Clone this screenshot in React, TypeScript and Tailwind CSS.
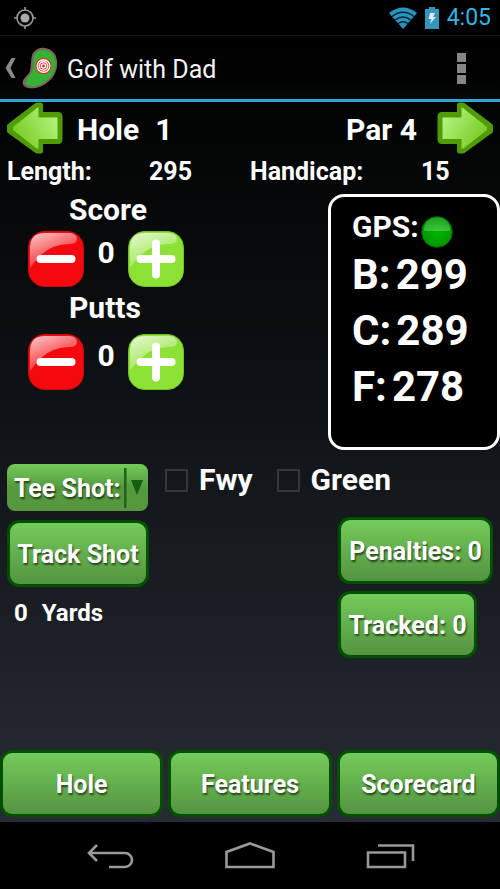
import { useState } from "react"

const greenButton = "h-[67px] rounded-xl border-3 border-[#005000] bg-linear-to-b from-[#74cb5a] to-[#549440] pt-0.5 text-[25px] font-bold whitespace-nowrap text-shadow-[1px_2px_2px_rgb(0_0_0/0.6)]"

function Arrow({ flip, id }: { flip?: boolean, id: string }) {
    return (
        <svg viewBox="0 0 56 52" className={flip ? "h-[52px] w-14 -scale-x-100" : "h-[52px] w-14"}>
            <defs>
                <linearGradient id={id} x1="1" y1="0.2" x2="0.1" y2="0.7">
                    <stop offset="0.1" stopColor="#b0f078" />
                    <stop offset="1" stopColor="#7acd28" />
                </linearGradient>
            </defs>
            <path d="M30 3H33.500V12.500H51Q53 12.500 53 15V37Q53 39.500 51 39.500H33.500V49H30L2.500 29V24Z" fill="#509c08" stroke="#509c08" strokeWidth="5" strokeLinejoin="round" />
            <path d="M30 6L31.500 5.500V15.500H50.500V37H31.500V47L29 46L6 28V25Z" fill={`url(#${id})`} />
        </svg>
    )
}

function StepIcon({ plus, id }: { plus?: boolean, id: string }) {
    return (
        <svg viewBox="0 0 56 56" className="size-14">
            <defs>
                <linearGradient id={id} x1="0.1" y1="0" x2="0.6" y2="0.9">
                    <stop offset="0" stopColor="#fff" stopOpacity="0.75" />
                    <stop offset="1" stopColor="#fff" stopOpacity="0.1" />
                </linearGradient>
            </defs>
            <rect x="0.5" y="0.5" width="55" height="55" rx="16" fill={plus ? "#8ce234" : "#f3090e"} stroke={plus ? "#72c226" : "#cc0a0c"} />
            <path d="M2 37V17Q2 2 17 2H42Q49 3 49 8Q49 13 41 13Q25 13 13 24Q6 31 2 37Z" fill={`url(#${id})`} />
            <path d="M12.500 28H43.500" stroke="#fff" strokeWidth="8" strokeLinecap="round" />
            {plus && <path d="M28 12.500V43.500" stroke="#fff" strokeWidth="8" strokeLinecap="round" />}
        </svg>
    )
}

function Counter({ label }: { label: string }) {
    const [count, setCount] = useState(0)
    return (
        <div className="group">
            <h2 className="mb-[5px] pl-[41px] text-3xl leading-8 font-bold group-last:mb-2.5">{label}</h2>
            <div className="flex">
                <button aria-label={`Less ${label}`} onClick={() => setCount(Math.max(0, count - 1))}>
                    <StepIcon id={`${label}-minus`} />
                </button>
                <span className="w-11 pt-1 text-center text-3xl leading-9 font-bold">{count}</span>
                <button aria-label={`More ${label}`} onClick={() => setCount(count + 1)}>
                    <StepIcon plus id={`${label}-plus`} />
                </button>
            </div>
        </div>
    )
}

function Distance({ label, value }: { label: string, value: number }) {
    return (
        <div className="flex gap-[5px] text-[42px] leading-14 font-bold">
            <span>{label}:</span>
            <span>{value}</span>
        </div>
    )
}

function StatusBar() {
    return (
        <div className="flex h-9 items-center border-b border-[#151515] bg-black px-[9px]">
            <svg viewBox="0 0 24 24" className="mr-auto ml-1 size-6" fill="none" stroke="#999" strokeWidth="1.600">
                <circle cx="12" cy="12" r="8" />
                <circle cx="12" cy="12" r="4.500" fill="#aaa" stroke="none" />
                <path d="M12 1V4M12 20V23M1 12H4M20 12H23" />
            </svg>
            <svg viewBox="0 0 28 22" className="mr-2 h-[22px] w-7" fill="#2b93bd">
                <path d="M0 6Q14 -5 28 6L14 22Z" />
                <path d="M3 9.500Q14 1 25 9.500M6 13Q14 7 22 13M9 16.500Q14 13 19 16.500" fill="none" stroke="#06222d" strokeWidth="1.300" />
            </svg>
            <svg viewBox="0 0 14 22" className="mr-2 h-[22px] w-3.5">
                <path d="M4 0H10V2H14V22H0V2H4Z" fill="#3496bb" />
                <path d="M5 6H10L8 10H11L5 17L6.500 12H3.500Z" fill="#d8eef6" />
            </svg>
            <span className="text-[23px] leading-9 text-[#33b5e5]">4:05</span>
        </div>
    )
}

function Header() {
    return (
        <header className="flex h-[66px] items-center border-b-3 border-[#2ba6d8] bg-linear-to-b from-black to-[#060809] pr-[34px] pl-[5px]">
            <button className="flex items-center gap-1.5" aria-label="Back">
                <svg viewBox="0 0 11 20" className="h-5 w-[11px]">
                    <path d="M10.500 0L5.500 10L10.500 20H6.500L0.500 10L6.500 0Z" fill="#888" />
                </svg>
                <svg viewBox="0 0 36 42" className="h-[42px] w-9">
                    <path d="M11 6C16 -1 27 -1 33 7C38 17 34 29 26 35C18 42 6 43 2 39C-2 34 4 30 7 26C10 20 8 12 11 6Z" fill="#78675f" />
                    <path d="M13 7C18 1 26 2 31 8C37 17 32 28 24 34C17 40 7 41 4 37C3 33 7 30 10 25C13 19 10 13 13 7Z" fill="#35b236" />
                    <circle cx="21.500" cy="19" r="8" fill="#e52620" />
                    <g fill="none" stroke="#fff" strokeWidth="1.400">
                        <circle cx="21.500" cy="19" r="6.300" />
                        <circle cx="21.500" cy="19" r="4.200" />
                        <circle cx="21.500" cy="19" r="2.100" />
                    </g>
                </svg>
            </button>
            <h1 className="mt-1 ml-[9px] text-[25px] text-[#f3f3f3]">Golf with Dad</h1>
            <button className="ml-auto flex flex-col gap-0.5 pt-0.5" aria-label="Menu">
                <span className="size-[9px] bg-[#868686]" />
                <span className="size-[9px] bg-[#868686]" />
                <span className="size-[9px] bg-[#868686]" />
            </button>
        </header>
    )
}

function Check({ label }: { label: string }) {
    return (
        <label className="flex items-center gap-[11px] text-3xl leading-8 font-bold">
            <input type="checkbox" className="size-[23px] appearance-none border-2 border-[#34383b] checked:bg-[#33b5e5]" />
            {label}
        </label>
    )
}

function NavBar() {
    return (
        <nav className="flex h-[67px] items-center justify-center gap-[88px] bg-black pt-1">
            <button aria-label="Back">
                <svg viewBox="0 0 52 32" className="h-8 w-13" fill="none" stroke="#999" strokeWidth="2.600">
                    <path d="M5 11H41A7 7 0 0 1 41 25H25M13 3L5 11L13 19" />
                </svg>
            </button>
            <button aria-label="Home">
                <svg viewBox="0 0 52 32" className="h-8 w-13" fill="none" stroke="#999" strokeWidth="2.600">
                    <path d="M2.500 25V10L26 1.500L49.500 10V25Z" />
                </svg>
            </button>
            <button aria-label="Recent apps">
                <svg viewBox="0 0 52 32" className="h-8 w-13" fill="none" stroke="#999" strokeWidth="2.600">
                    <path d="M4 10.500H41V25H4ZM14 3.500H49V19" />
                </svg>
            </button>
        </nav>
    )
}

export default function App() {
    return (
        <div className="flex min-h-screen flex-col bg-black font-[Roboto,sans-serif] text-white">
            <StatusBar />
            <Header />
            <main className="flex flex-1 flex-col bg-linear-to-b from-[#030404] to-[#272c34]">
                <div className="flex items-center px-[7px] text-3xl font-bold">
                    <button aria-label="Previous hole"><Arrow id="prev" /></button>
                    <span className="mt-1 ml-3.5">Hole</span>
                    <span className="mt-1 ml-4">1</span>
                    <span className="mt-1 mr-5 ml-auto">Par 4</span>
                    <button aria-label="Next hole"><Arrow flip id="next" /></button>
                </div>
                <div className="grid grid-cols-2 text-[25px] leading-9 font-bold">
                    <div className="flex pl-[7px]">
                        <span className="w-[142px]">Length:</span>
                        <span>295</span>
                    </div>
                    <div className="flex">
                        <span className="w-[171px]">Handicap:</span>
                        <span>15</span>
                    </div>
                </div>
                <div className="mt-1 flex justify-between">
                    <div className="flex flex-col gap-[5px] pl-7">
                        <Counter label="Score" />
                        <Counter label="Putts" />
                    </div>
                    <section className="h-64 w-[172px] rounded-2xl border-3 border-white bg-black pt-2.5 pl-[21px]">
                        <div className="flex h-10 items-center text-3xl leading-9 font-bold">
                            GPS:
                            <span className="mt-2.5 ml-0.5 size-8 overflow-hidden rounded-full border border-[#064d06] bg-radial from-[#00b800] to-[#008a00] px-0.5">
                                <span className="block h-3.5 rounded-t-full rounded-b-lg bg-linear-to-b from-white/10 to-white/25" />
                            </span>
                        </div>
                        <Distance label="B" value={299} />
                        <Distance label="C" value={289} />
                        <Distance label="F" value={278} />
                    </section>
                </div>
                <div className="mt-[14px] flex items-start px-[7px]">
                    <div className="relative">
                        <select aria-label="Tee shot" className="h-[47px] w-[141px] appearance-none rounded-lg bg-linear-to-b from-[#74cb5a] via-[#559a3e] to-[#56963f] pt-0.5 pl-[7px] text-[25px] font-bold text-shadow-[1px_2px_2px_rgb(0_0_0/0.6)]">
                            <option>Tee Shot:</option>
                        </select>
                        <svg viewBox="0 0 24 40" className="pointer-events-none absolute top-1 right-0 h-10 w-6">
                            <path d="M0 0H2.500V40H0Z" fill="#20641c" />
                            <path d="M7 12H19L13 27Z" fill="#155f13" />
                        </svg>
                    </div>
                    <div className="ml-[17px] flex gap-6">
                        <Check label="Fwy" />
                        <Check label="Green" />
                    </div>
                </div>
                <div className="mt-1.5 flex items-start justify-between px-[7px]">
                    <div className="pt-[3px]">
                        <button className={`${greenButton} w-[142px]`}>Track Shot</button>
                        <div className="mt-2 flex gap-3.5 pl-[7px] text-2xl leading-9 font-bold">
                            <span>0</span>
                            <span>Yards</span>
                        </div>
                    </div>
                    <div className="flex flex-col items-start gap-[7px]">
                        <button className={`${greenButton} w-[155px]`}>Penalties: 0</button>
                        <button className={`${greenButton} w-[139px]`}>Tracked: 0</button>
                    </div>
                </div>
                <div className="mt-auto grid grid-cols-3 gap-[5px] pb-[5px]">
                    <button className={greenButton}>Hole</button>
                    <button className={greenButton}>Features</button>
                    <button className={greenButton}>Scorecard</button>
                </div>
            </main>
            <NavBar />
        </div>
    )
}
